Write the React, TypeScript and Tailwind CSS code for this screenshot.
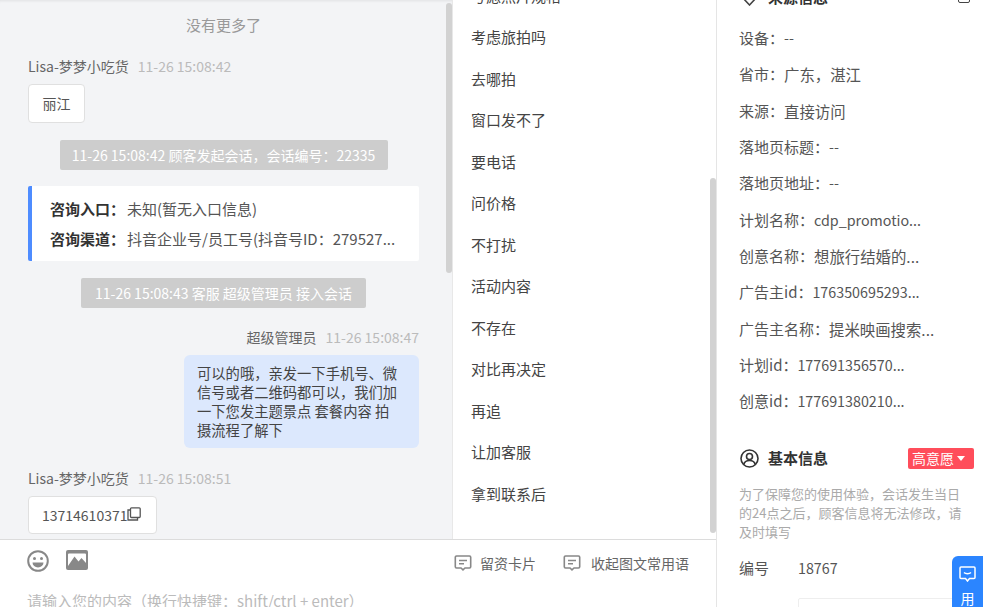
import React from "react";

const phrases = ["考虑旅拍吗", "去哪拍", "窗口发不了", "要电话", "问价格", "不打扰", "活动内容", "不存在", "对比再决定", "再追", "让加客服", "拿到联系后"];
const info: [string, string, boolean?][] = [
  ["设备：", "--", true],
  ["省市：", "广东，湛江"],
  ["来源：", "直接访问"],
  ["落地页标题：", "--", true],
  ["落地页地址：", "--", true],
  ["计划名称：", "cdp_promotio...", true],
  ["创意名称：", "想旅行结婚的..."],
  ["广告主id：", "176350695293...", true],
  ["广告主名称：", "提米映画搜索..."],
  ["计划id：", "177691356570...", true],
  ["创意id：", "177691380210...", true],
];

function Name({ name, time, right }: { name: string; time: string; right?: boolean }) {
  return (
    <div className={`flex gap-[9px] text-[14px] leading-[20px] ${right ? "justify-end" : ""}`}>
      <span className="text-[#666]">{name}</span>
      <span className="text-[#bbb]">{time}</span>
    </div>
  );
}

function Notice({ text, width }: { text: string; width: string }) {
  return (
    <div className={`mx-auto flex h-[30px] items-center justify-center rounded-[2px] bg-[#cdcdcd] text-[14px] text-white ${width}`}>{text}</div>
  );
}

function CardIcon() {
  return (
    <svg width="18" height="16" viewBox="0 0 18 16" fill="none" stroke="#888" strokeWidth="1.6">
      <path d="M2.5 1h13a1.2 1.2 0 0 1 1.2 1.2v9.600a1.200 1.200 0 0 1-1.200 1.200H11l-2 1.800L7 13H2.500A1.200 1.200 0 0 1 1.300 11.800V2.200A1.200 1.200 0 0 1 2.500 1z" />
      <path d="M5 5.500h8M5 8.800h5" />
    </svg>
  );
}

export default function App() {
  return (
    <div className="flex h-[607px] w-[983px] overflow-hidden bg-white font-['Noto_Sans_CJK_SC','Liberation_Sans',sans-serif] text-[#555]">
      <div className="flex h-full w-[717px] shrink-0 flex-col border-r border-[#e5e5e5]">
        <div className="flex h-[540px] shrink-0 border-b border-[#dcdcdc]">
          <div className="relative h-full w-[453px] shrink-0 overflow-hidden border-r border-[#e8e8e8] bg-[#f3f4f6] shadow-[inset_0_3px_3px_-2px_rgba(0,0,0,0.08)]">
            <div className="flex flex-col pl-[28px] pr-[33px]">
              <div className="mt-[15px] h-[20px] text-center text-[15px] leading-[20px] text-[#999]">没有更多了</div>
              <div className="mt-[21px]"><Name name="Lisa-梦梦小吃货" time="11-26 15:08:42" /></div>
              <div className="mt-[8px] flex h-[39px] w-[57px] items-center justify-center rounded-[4px] border border-[#e0e0e0] bg-white text-[14px]">丽江</div>
              <div className="mt-[17px]"><Notice text="11-26 15:08:42 顾客发起会话，会话编号：22335" width="w-[328px]" /></div>
              <div className="mt-[16px] flex h-[75px] flex-col justify-center gap-[10px] rounded-[2px] border-l-4 border-[#4e8cff] bg-white pl-[18px] text-[15px] leading-[20px]">
                <div className="whitespace-nowrap"><b className="mr-[2px] font-bold text-[#333]">咨询入口：</b>未知(暂无入口信息)</div>
                <div className="whitespace-nowrap"><b className="mr-[2px] font-bold text-[#333]">咨询渠道：</b>抖音企业号/员工号(抖音号ID：279527...</div>
              </div>
              <div className="mt-[17px]"><Notice text="11-26 15:08:43 客服 超级管理员 接入会话" width="w-[285px]" /></div>
              <div className="mt-[19px]"><Name name="超级管理员" time="11-26 15:08:47" right /></div>
              <div className="ml-auto mt-[8px] h-[93px] w-[235px] whitespace-nowrap rounded-[6px] bg-[#dce8fd] px-[13px] py-[8px] text-[14.300px] leading-[19px] text-[#444]">
                可以的哦，亲发一下手机号、微<br />信号或者二维码都可以，我们加<br />一下您发主题景点 套餐内容 拍<br />摄流程了解下
              </div>
              <div className="mt-[20px]"><Name name="Lisa-梦梦小吃货" time="11-26 15:08:51" /></div>
              <div className="mt-[8px] flex h-[38px] w-[129px] items-center rounded-[4px] border border-[#e0e0e0] bg-white pl-[13px] text-[14px]">
                13714610371
                <svg width="14" height="14" viewBox="0 0 14 14" fill="none" stroke="#555" strokeWidth="1.300" className="mb-[3px]">
                  <rect x="3.500" y="0.800" width="9.700" height="9.700" rx="1" />
                  <path d="M3.500 3H1v10h9.500v-2.500" />
                </svg>
              </div>
            </div>
            <div className="absolute left-[446px] top-[3px] h-[270px] w-[6px] rounded-[3px] bg-[#d2d2d2]" />
          </div>
          <div className="relative h-full flex-1 overflow-hidden">
            <div className="-mt-[25px] pl-[18px] text-[15px] leading-[20px] text-[#444]">
              <div className="flex h-[41.500px] items-center">考虑照片规格</div>
              {phrases.map((p) => (
                <div key={p} className="flex h-[41.500px] items-center">{p}</div>
              ))}
            </div>
            <div className="absolute right-0 top-[178px] h-[355px] w-[6px] rounded-[3px] bg-[#d2d2d2]" />
          </div>
        </div>
        <div className="flex h-[67px] shrink-0 flex-col overflow-hidden pl-[27px]">
          <div className="flex h-[44px] shrink-0 items-start">
            <svg width="22" height="22" viewBox="0 0 22 22" className="mt-[10px]" fill="none">
              <circle cx="11" cy="11" r="9.800" stroke="#888" strokeWidth="2" />
              <circle cx="7.500" cy="8.500" r="1.500" fill="#888" />
              <circle cx="14.500" cy="8.500" r="1.500" fill="#888" />
              <path d="M5.500 12.500h11a5.500 5 0 0 1-11 0z" fill="#888" />
            </svg>
            <svg width="22" height="20" viewBox="0 0 22 20" className="ml-[17px] mt-[10px]">
              <rect width="22" height="20" rx="2" fill="#888" />
              <path d="M2 16V4.500a1 1 0 0 1 1-1h16a1 1 0 0 1 1 1V13l-4.500-5-3 3.500L8.500 6.500z" fill="#fff" />
            </svg>
            <div className="ml-auto mr-[27px] mt-[14px] flex items-center text-[14px] leading-[18px] text-[#666]">
              <CardIcon />
              <span className="ml-[8px]">留资卡片</span>
              <span className="ml-[27px]"><CardIcon /></span>
              <span className="ml-[10px]">收起图文常用语</span>
            </div>
          </div>
          <div className="mt-[7px] shrink-0 whitespace-nowrap text-[15px] leading-[20px] text-[#bbb]">请输入您的内容（换行快捷键：shift/ctrl + enter）</div>
        </div>
      </div>

      <div className="relative h-full flex-1 overflow-hidden pl-[22px]">
        <div className="-mt-[12px] flex h-[18px] items-center pr-[13px]">
          <svg width="17" height="17" viewBox="0 0 17 17" fill="none" stroke="#444" strokeWidth="1.600" className="ml-[2px]">
            <path d="M8.500 16L1.500 8.500 8.500 1l7 7.500z" />
          </svg>
          <span className="ml-[10px] text-[15px] font-bold text-[#333]">来源信息</span>
          <span className="ml-auto h-[12px] w-[12px] rounded-[2px] border-[1.500px] border-[#444]" />
        </div>
        <div className="mt-[14px] flex flex-col text-[15px] leading-[20px] text-[#555]">
          {info.map(([label, value, latin]) => (
            <div key={label} className="flex h-[36.300px] items-center whitespace-nowrap">
              {label}
              <span className={latin ? "text-[14.300px]" : "text-[15.400px]"}>{value}</span>
            </div>
          ))}
        </div>
        <div className="mt-[28px] flex h-[22px] items-center pr-[9px]">
          <svg width="19" height="19" viewBox="0 0 19 19" fill="none" stroke="#333" strokeWidth="1.600" className="ml-[1px]">
            <circle cx="9.500" cy="9.500" r="8.500" />
            <circle cx="9.500" cy="7.500" r="3" />
            <path d="M3.800 15.500c.6-2.800 2.900-4 5.700-4s5.100 1.200 5.700 4" />
          </svg>
          <span className="ml-[9px] text-[15px] font-bold leading-[20px] text-[#333]">基本信息</span>
          <span className="ml-auto flex h-[21px] w-[66px] items-center gap-[3px] rounded-[2px] bg-[#ff4d5b] pl-[4px] text-[14px] text-white">
            高意愿
            <span className="mt-[1px] h-0 w-0 border-x-[4px] border-t-[5px] border-x-transparent border-t-white" />
          </span>
        </div>
        <div className="mt-[15px] w-[228px] text-[13px] leading-[19px] text-[#aaa]">为了保障您的使用体验，会话发生当日的24点之后，顾客信息将无法修改，请及时填写</div>
        <div className="mt-[17px] flex text-[15px] leading-[20px] text-[#555]">
          <span className="w-[59px]">编号</span>
          <span className="text-[14.300px]">18767</span>
        </div>
        <div className="ml-[59px] mt-[20px] h-[40px] w-[165px] rounded-[2px] border border-[#eee]" />
        <div className="absolute left-[235px] top-[556px] flex h-[60px] w-[31px] flex-col items-center rounded-tl-[6px] bg-[#2b85ff] pt-[10px] text-[14px] leading-[18px] text-white">
          <svg width="17" height="16" viewBox="0 0 17 16" fill="none" stroke="#fff" strokeWidth="1.500">
            <path d="M2 1h13a1 1 0 0 1 1 1v9.500a1 1 0 0 1-1 1h-4.500L8.500 15l-2-2.500H2a1 1 0 0 1-1-1V2a1 1 0 0 1 1-1z" />
            <path d="M5 6.500c1.500 1.500 5.500 1.500 7 0" />
          </svg>
          <span className="mt-[7px]">用</span>
        </div>
      </div>
    </div>
  );
}
